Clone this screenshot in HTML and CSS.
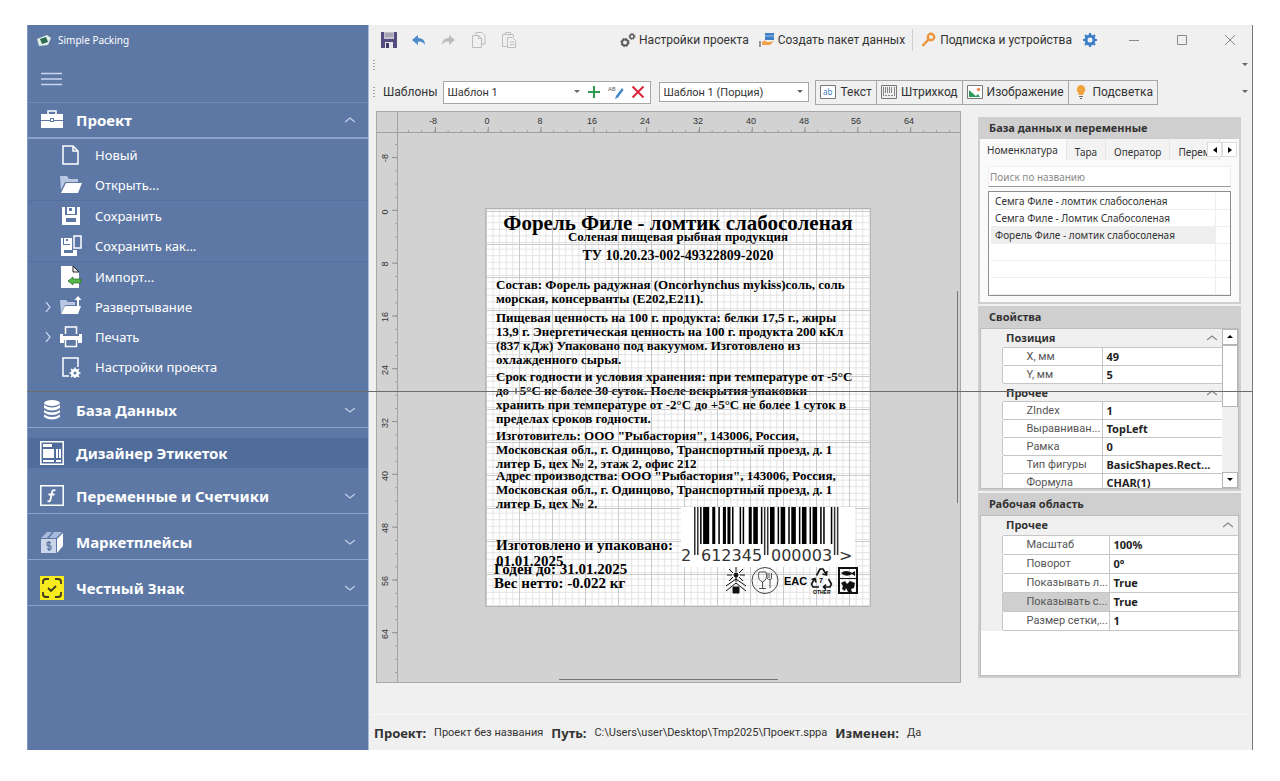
FILE: index.html
```html
<!DOCTYPE html>
<html lang="ru">
<head>
    <meta charset="UTF-8">
    <meta name="viewport" content="width=device-width, initial-scale=1.0">
    <title>Simple Packing</title>
    <link rel="stylesheet" href="styles.css">
</head>
<body>
<div class="app">
    <nav class="sidebar">
        <div class="brand">
            <svg width="16" height="14" viewBox="0 0 16 14"><path d="M1 6l10-4 4 3-3 7-9 1z" fill="#dfeee6"/><path d="M4 6l6-2 2 5-6 2z" fill="#2d6b50"/></svg>
            <span>Simple Packing</span>
        </div>
        <div class="menu-toggle">
            <button type="button" aria-label="Меню"><svg width="21" height="14" viewBox="0 0 21 14"><path d="M0 1.500h21M0 7h21M0 12.500h21" stroke="#c9d6ee" stroke-width="1.500"/></svg></button>
        </div>

        <button type="button" class="group first">
            <svg class="group-icon" viewBox="0 0 24 24"><path d="M8 6V3h8v3" fill="none" stroke="#fff" stroke-width="1.500"/><path d="M1 6h22v6h-9v-2h-4v2H1zM1 13h9v1h4v-1h9v7H1z" fill="#fff"/><path d="M11 11h2v2h-2z" fill="#fff"/></svg>
            <span>Проект</span>
            <svg class="chev" viewBox="0 0 10 6"><path d="M0 5l5-4 5 4"/></svg>
        </button>
        <ul class="items">
            <li><a href="#new"><svg class="item-icon" viewBox="0 0 22 22"><path d="M3 2h10l5 5v13H3zM13 2v5h5" fill="none" stroke="#fff" stroke-width="1.500"/></svg>Новый</a></li>
            <li><a href="#open"><svg class="item-icon" viewBox="0 0 22 22"><path d="M0 2h7l2 3h9v3H5L1 16z" fill="#b9c7e2"/><path d="M6 9h16l-4 10H1z" fill="#fff"/></svg>Открыть...</a></li>
            <li class="ruled"><a href="#save"><svg class="item-icon" viewBox="0 0 22 22"><path d="M2 2h3v8h12V2h3v18H2zM6 13v4h10v-4z" fill="#fff" fill-rule="evenodd"/><path d="M7 2h8v7H7zM9 3v3h3V3z" fill="#fff" fill-rule="evenodd"/></svg>Сохранить</a></li>
            <li><a href="#save-as"><svg class="item-icon" viewBox="0 0 22 22"><path d="M1 3h2v7h7v-7h2v12h5v6H1zM4 15v3h9v-3z" fill="#fff" fill-rule="evenodd"/><path d="M4 3h6v6H4zM6 4v2h2V4z" fill="#fff" fill-rule="evenodd"/><path d="M14 1h7v12h-7z" fill="#5d78a5" stroke="#fff" stroke-width="1.500"/></svg>Сохранить как...</a></li>
            <li class="ruled"><a href="#import"><svg class="item-icon" viewBox="0 0 22 22"><path d="M1 0h12l6 6v16H1z" fill="#fff"/><path d="M13 0l6 6h-6z" fill="#eee" stroke="#222"/><path d="M8 15l5-4v2h8v4h-8v2z" fill="#54b848" stroke="#26652a" stroke-width=".7"/></svg>Импорт...</a></li>
            <li><svg class="expander" viewBox="0 0 6 10"><path d="M1 0l4 5-4 5"/></svg><a href="#deploy"><svg class="item-icon" viewBox="0 0 22 22"><path d="M0 4h6l2 2h7v3H5L1 17z" fill="#b9c7e2"/><path d="M5 10h16l-3 8H1z" fill="#fff"/><path d="M17 10V4h-2.500L18 0l3.500 4H19v6z" fill="#fff"/></svg>Развертывание</a></li>
            <li><svg class="expander" viewBox="0 0 6 10"><path d="M1 0l4 5-4 5"/></svg><a href="#print"><svg class="item-icon" viewBox="0 0 22 22"><path d="M5.500 8V1h11v7" fill="none" stroke="#fff" stroke-width="1.500"/><path d="M0 8h3v3h16V8h3v9h-4v-3H4v3H0z" fill="#fff"/><path d="M3 10h16v3H3z" fill="#fff"/><path d="M5.500 14v6.500h11V14" fill="none" stroke="#fff" stroke-width="1.500"/></svg>Печать</a></li>
            <li><a href="#settings"><svg class="item-icon" viewBox="0 0 22 22"><path d="M9 20H3V2h15v9" fill="none" stroke="#fff" stroke-width="1.500"/><circle cx="15" cy="17" r="3" fill="none" stroke="#fff" stroke-width="2.500"/><path d="M15 11.500v11M9.500 17h11M11 13l8 8M19 13l-8 8" stroke="#fff" stroke-width="1.500"/><circle cx="15" cy="17" r="1.500" fill="#5d78a5"/></svg>Настройки проекта</a></li>
        </ul>

        <button type="button" class="group">
            <svg class="group-icon" viewBox="0 0 24 24"><g fill="#fff"><ellipse cx="12" cy="5" rx="8" ry="3"/><path d="M4 7q8 5 16 0v3q-8 5-16 0zM4 12q8 5 16 0v2.500q-8 5-16 0zM4 16.500q8 5 16 0V19q-8 5-16 0z"/></g></svg>
            <span>База Данных</span>
            <svg class="chev" viewBox="0 0 10 6"><path d="M0 1l5 4 5-4"/></svg>
        </button>
        <button type="button" class="group active">
            <svg class="group-icon" viewBox="0 0 24 24"><path d="M.8.800h22.400v22.400H.8z" fill="none" stroke="#fff" stroke-width="1.500"/><path d="M3 3h9v3H3zM3 8h11v9H3zM3 19h11v2H3zM16 8h2v9h-2zM19 8h2v9h-2zM16 19h5v2h-5z" fill="#fff"/></svg>
            <span>Дизайнер Этикеток</span>
        </button>
        <button type="button" class="group">
            <svg class="group-icon" viewBox="0 0 24 24"><path d="M.8 1.800h22.400v19.400H.8z" fill="none" stroke="#fff" stroke-width="1.500"/><path d="M15.500 6.500q-3-1.500-3.500 2l-1.500 7q-.5 2.500-3 1.500M8.500 10.500h6" fill="none" stroke="#fff" stroke-width="1.800"/></svg>
            <span>Переменные и Счетчики</span>
            <svg class="chev" viewBox="0 0 10 6"><path d="M0 1l5 4 5-4"/></svg>
        </button>
        <button type="button" class="group">
            <svg class="group-icon" viewBox="0 0 24 24"><path d="M1 8l6-6h5L7 8zM9 8l5-6h8l-6 6z" fill="#a9bbdc"/><path d="M1 9h15v14H1z" fill="#ccd6ea"/><path d="M17 9l6-6v13l-6 7z" fill="#fff"/><path d="M11 13q-4-2-4 .8t2 1.800 2 2.300-4 .6M9 11v10" fill="none" stroke="#5d78a5" stroke-width="1.300"/></svg>
            <span>Маркетплейсы</span>
            <svg class="chev" viewBox="0 0 10 6"><path d="M0 1l5 4 5-4"/></svg>
        </button>
        <button type="button" class="group">
            <svg class="group-icon" viewBox="0 0 24 24"><path d="M0 0h24v24H0z" fill="#f7ea1e"/><path d="M3 8V6q0-3 3-3h3M15 3h3q3 0 3 3v2M21 16v2q0 3-3 3h-3M9 21H6q-3 0-3-3v-2M8 12l3 3 5-5" fill="none" stroke="#3a3a20" stroke-width="1.800"/></svg>
            <span>Честный Знак</span>
            <svg class="chev" viewBox="0 0 10 6"><path d="M0 1l5 4 5-4"/></svg>
        </button>
    </nav>

    <main class="main">
        <header class="titlebar">
            <div class="quick">
                <button type="button" aria-label="Сохранить"><svg width="18" height="18" viewBox="0 0 18 18"><path d="M1 1h16v16H1z" fill="#574c80"/><path d="M4 1h10v7H4z" fill="#c5c3cd"/><path d="M5 3h8M5 5h8" stroke="#8a8799"/><path d="M5 11h8v6H5z" fill="#e8e8ee"/><path d="M6 12h3v5H6z" fill="#453b6b"/></svg></button>
                <button type="button" aria-label="Отменить"><svg width="18" height="18" viewBox="0 0 18 18"><path d="M2 9l6-5v3q7 0 7 7-2-4-7-3.500V14z" fill="#4a8acb"/></svg></button>
                <button type="button" aria-label="Вернуть"><svg width="18" height="18" viewBox="0 0 18 18"><path d="M15 9L9 4v3q-7 0-7 7 2-4 7-3.500V14z" fill="#bcbcbc"/></svg></button>
                <button type="button" aria-label="Копировать"><svg width="18" height="18" viewBox="0 0 18 18"><path d="M6 4V1.500h6l3 3V13h-3M2.500 4.500h6l3 3v9h-9zM8.500 4.500v3h3" fill="none" stroke="#bdbdbd"/></svg></button>
                <button type="button" aria-label="Вставить"><svg width="18" height="18" viewBox="0 0 18 18"><path d="M7 15.500H2.500v-12h11V6M5.500 3.500v-2h5v2zM7.500 6.500h5l3 3v7h-8zM10 11h4M10 13.500h4" fill="none" stroke="#bdbdbd"/></svg></button>
            </div>
            <button type="button" class="cmd"><svg width="16" height="16" viewBox="0 0 16 16"><g fill="none" stroke="#5f5f5f"><circle cx="5" cy="10.500" r="3" stroke-width="2"/><circle cx="5" cy="10.500" r="4.200" stroke-width="1" stroke-dasharray="1.500 1.800"/><circle cx="12" cy="4.500" r="2" stroke-width="1.600"/><circle cx="12" cy="4.500" r="3" stroke-width="1" stroke-dasharray="1.200 1.200"/></g></svg>Настройки проекта</button>
            <button type="button" class="cmd"><svg width="16" height="16" viewBox="0 0 16 16"><path d="M6 1h9v7H6z" fill="#3f7fc4"/><path d="M6 4h9" stroke="#9cc2e8"/><path d="M3 10q3-3 5 0h3l4-1-4 4H3z" fill="#f2a04a"/><path d="M1 9v6" stroke="#777" stroke-width="1.500"/></svg>Создать пакет данных</button>
            <button type="button" class="cmd split"><svg width="16" height="16" viewBox="0 0 16 16"><path d="M7.500 7.500L1.500 14" stroke="#e8953c" stroke-width="2.500"/><circle cx="10" cy="5" r="3.200" fill="none" stroke="#e8953c" stroke-width="2.400"/></svg>Подписка и устройства</button>
            <button type="button" class="cmd" aria-label="Параметры"><svg width="16" height="16" viewBox="0 0 16 16"><circle cx="8" cy="8" r="4" fill="none" stroke="#3c7fc6" stroke-width="3"/><path d="M8 1v3M8 12v3M1 8h3M12 8h3M3 3l2 2M11 11l2 2M13 3l-2 2M5 11l-2 2" stroke="#3c7fc6" stroke-width="2.200"/></svg></button>
            <div class="window-buttons">
                <button type="button" aria-label="Свернуть"><svg width="12" height="12" viewBox="0 0 12 12"><path d="M1 6.500h10"/></svg></button>
                <button type="button" aria-label="Развернуть"><svg width="12" height="12" viewBox="0 0 12 12"><path d="M1.500 1.500h9v9h-9z"/></svg></button>
                <button type="button" aria-label="Закрыть"><svg width="12" height="12" viewBox="0 0 12 12"><path d="M1 1l10 10M11 1L1 11"/></svg></button>
            </div>
        </header>

        <div class="toolbar slim">
            <i class="grip"></i>
            <svg class="more" viewBox="0 0 6 4"><path d="M0 0h6L3 3z"/></svg>
        </div>
        <div class="toolbar">
            <i class="grip"></i>
            <label for="template">Шаблоны</label>
            <div class="combo wide">
                <select id="template"><option>Шаблон 1</option></select>
                <svg class="arrow" viewBox="0 0 6 4"><path d="M0 0h6L3 3z"/></svg>
                <button type="button" aria-label="Добавить"><svg width="14" height="14" viewBox="0 0 14 14"><path d="M7 1v12M1 7h12" stroke="#2f9a4d" stroke-width="2"/></svg></button>
                <button type="button" aria-label="Переименовать"><svg width="16" height="14" viewBox="0 0 16 14"><text x="0" y="6" class="tiny">AB</text><path d="M14 3L8 11l-1 3 3-1.500L15.500 5z" fill="#3f86c9"/></svg></button>
                <button type="button" aria-label="Удалить"><svg width="14" height="14" viewBox="0 0 14 14"><path d="M1.500 1.500l11 11M12.500 1.500l-11 11" stroke="#d8283c" stroke-width="2"/></svg></button>
            </div>
            <div class="combo">
                <select id="variant" aria-label="Вариант шаблона"><option>Шаблон 1 (Порция)</option></select>
                <svg class="arrow" viewBox="0 0 6 4"><path d="M0 0h6L3 3z"/></svg>
            </div>
            <div class="tools">
                <button type="button"><svg width="16" height="14" viewBox="0 0 16 14"><path d="M.5.500h15v13H.5z" fill="#fff" stroke="#777"/><text x="3" y="10" class="ab">ab</text></svg>Текст</button>
                <button type="button"><svg width="16" height="14" viewBox="0 0 16 14"><path d="M.5.500h15v13H.5z" fill="#eee" stroke="#777"/><path d="M2.500 2v9M4.500 2v6M6.500 2v6M8.500 2v6M10.500 2v6M13.500 2v9M4 10.500h2M7 10.500h2M10 10.500h2" stroke="#888"/></svg>Штрихкод</button>
                <button type="button"><svg width="16" height="14" viewBox="0 0 16 14"><path d="M.5.500h15v13H.5z" fill="#fff" stroke="#777"/><path d="M2 12V5l8 7z" fill="#2f9a5c"/><path d="M8 12l3-3 2 3z" fill="#2f9a5c"/><circle cx="11.500" cy="4.500" r="1.800" fill="#ef8f5a"/></svg>Изображение</button>
                <button type="button"><svg width="16" height="16" viewBox="0 0 16 16"><path d="M8 1a4.500 4.500 0 0 1 2.500 8v2h-5V9A4.500 4.500 0 0 1 8 1z" fill="#f0a03c"/><path d="M6 12.500h4M7 14.500h2" stroke="#666" stroke-width="1.200"/></svg>Подсветка</button>
            </div>
            <svg class="more" viewBox="0 0 6 4"><path d="M0 0h6L3 3z"/></svg>
        </div>

        <div class="workspace">
            <section class="canvas" aria-label="Макет этикетки">
                <div class="corner"></div>
                <svg class="ruler ruler-x" width="100%" height="21">
                    <defs>
                        <pattern id="minor-x" x="10" width="13.200" height="21" patternUnits="userSpaceOnUse"><path d="M.5 18v3" stroke="#a0a0a0"/></pattern>
                        <pattern id="major-x" x="37" width="52.800" height="21" patternUnits="userSpaceOnUse"><path d="M.5 15v6" stroke="#909090"/></pattern>
                    </defs>
                    <rect width="100%" height="21" fill="url(#minor-x)"/>
                    <rect width="100%" height="21" fill="url(#major-x)"/>
                    <g>
                        <text x="35" y="12">-8</text><text x="89" y="12">0</text><text x="142" y="12">8</text><text x="194" y="12">16</text><text x="247" y="12">24</text><text x="300" y="12">32</text><text x="353" y="12">40</text><text x="406" y="12">48</text><text x="458" y="12">56</text><text x="511" y="12">64</text>
                    </g>
                </svg>
                <svg class="ruler ruler-y" width="21" height="100%">
                    <defs>
                        <pattern id="minor-y" y="11" width="21" height="13.200" patternUnits="userSpaceOnUse"><path d="M18 .5h3" stroke="#a0a0a0"/></pattern>
                        <pattern id="major-y" y="24" width="21" height="52.800" patternUnits="userSpaceOnUse"><path d="M15 .5h6" stroke="#909090"/></pattern>
                    </defs>
                    <rect width="21" height="100%" fill="url(#minor-y)"/>
                    <rect width="21" height="100%" fill="url(#major-y)"/>
                    <g transform="rotate(-90)">
                        <text x="-25" y="11">-8</text><text x="-79" y="11">0</text><text x="-131" y="11">8</text><text x="-184" y="11">16</text><text x="-237" y="11">24</text><text x="-290" y="11">32</text><text x="-343" y="11">40</text><text x="-395" y="11">48</text><text x="-448" y="11">56</text><text x="-501" y="11">64</text>
                    </g>
                </svg>
                <div class="scene">
                    <article class="sheet">
                        <svg class="grid" width="100%" height="100%">
                            <defs>
                                <pattern id="cell" width="6.600" height="6.600" patternUnits="userSpaceOnUse"><path d="M.5 0v6.600M0 .5h6.600" stroke="#e2e2e2"/></pattern>
                                <pattern id="block" width="33" height="33" patternUnits="userSpaceOnUse"><path d="M.5 0v33M0 2.500h33" stroke="#cacaca"/></pattern>
                            </defs>
                            <rect width="100%" height="100%" fill="url(#cell)"/>
                            <rect width="100%" height="100%" fill="url(#block)"/>
                        </svg>
                        <h1 class="text product">Форель Филе - ломтик слабосоленая</h1>
                        <p class="text kind">Соленая пищевая рыбная продукция</p>
                        <p class="text spec">ТУ 10.20.23-002-49322809-2020</p>
                        <p class="text contents">Состав: Форель радужная (Oncorhynchus mykiss)соль, соль<br>морская, консерванты (E202,E211).</p>
                        <p class="text nutrition">Пищевая ценность на 100 г. продукта: белки 17,5 г., жиры<br>13,9 г. Энергетическая ценность на 100 г. продукта 200 кКл<br>(837 кДж) Упаковано под вакуумом. Изготовлено из<br>охлажденного сырья.</p>
                        <p class="text storage">Срок годности и условия хранения: при температуре от -5°C<br>до +5°C не более 30 суток. После вскрытия упаковки<br>хранить при температуре от -2°C до +5°C не более 1 суток в<br>пределах сроков годности.</p>
                        <p class="text maker">Изготовитель: ООО "Рыбастория", 143006, Россия,<br>Московская обл., г. Одинцово, Транспортный проезд, д. 1<br>литер Б, цех № 2, этаж 2, офис 212</p>
                        <p class="text address">Адрес производства: ООО "Рыбастория", 143006, Россия,<br>Московская обл., г. Одинцово, Транспортный проезд, д. 1<br>литер Б, цех № 2.</p>
                        <p class="text packed">Изготовлено и упаковано:<br>01.01.2025</p>
                        <p class="text expires">Годен до: 31.01.2025</p>
                        <p class="text weight">Вес нетто: -0.022 кг</p>
                        <svg class="barcode" width="174" height="60" viewBox="0 0 174 60">
                            <g transform="translate(13 0) scale(1.520 1)">
                                <path fill="#000" d="M4 0h1v37h-1zM6 0h4v37h-4zM12 0h2v37h-2zM16 0h1v37h-1zM19 0h2v37h-2zM22 0h2v37h-2zM25 0h1v37h-1zM30 0h1v37h-1zM32 0h1v37h-1zM36 0h2v37h-2zM39 0h3v37h-3zM44 0h1v37h-1zM50 0h3v37h-3zM55 0h1v37h-1zM57 0h3v37h-3zM62 0h1v37h-1zM64 0h3v37h-3zM69 0h1v37h-1zM71 0h3v37h-3zM76 0h1v37h-1zM78 0h3v37h-3zM83 0h1v37h-1zM85 0h1v37h-1zM90 0h1v37h-1z"/>
                                <path fill="#333" d="M0 0h1v48h-1zM2 0h1v48h-1zM46 0h1v48h-1zM48 0h1v48h-1zM92 0h1v48h-1zM94 0h1v48h-1z"/>
                            </g>
                            <text x="0" y="54">2</text><text x="20" y="54">612345</text><text x="90" y="54">000003</text><text x="158" y="54">&gt;</text>
                        </svg>
                        <svg class="marks" width="136" height="28" viewBox="0 0 136 28">
                            <g stroke="#111" fill="none">
                                <circle cx="12" cy="8" r="2" fill="#111"/>
                                <path d="M12 0v5M12 10v5M3 8h5M16 8h5M5 2l4 4M19 2l-4 4M5 14l4-4M19 14l-4-4M2 19l10-7 10 7M2 24l10-8 10 8"/>
                                <path d="M9 20h6v6H9z" fill="#111"/>
                                <circle cx="41" cy="13.500" r="13" stroke="#444"/>
                                <path d="M35 5h7q2 8-3.500 10Q33 13 35 5zM38.500 15v6M35 21.500h7M43 6v5q1 2 3 1.500V21M45 6v5M47.500 6v5q0 1.500-1.500 1.500" stroke="#555"/>
                                <path d="M92.500 8.500l3.500-6.500h3l3 5M103 4l-.5 4-4-1M104.500 12l3 5-1.500 3h-6M102 17.500l-2.500 2.500 2.500 2.500M95 20h-6l-1.500-3 3-5M87.500 12.500l3.500-1 1 4" stroke-width="1.600"/>
                            </g>
                            <text x="60" y="18" class="eac">EAC</text>
                            <text x="95" y="16" class="seven">7</text>
                            <text x="89" y="27" class="other">OTHER</text>
                            <path d="M115 1h18v25h-18z" fill="none" stroke="#111" stroke-width="2"/>
                            <path d="M117 6q5-4 11 0l3-2v5l-3-2q-6 4-11-1zM117 16l4-2 2 3 3-3 5 2-1 5-3 1 1 3h-4l-2-4-1 3-3-2 1-3zM115 11h18v1h-18z" fill="#111"/>
                        </svg>
                    </article>
                    <i class="thumb thumb-x"></i>
                    <i class="thumb thumb-y"></i>
                </div>
            </section>

            <aside class="panels">
                <section class="panel">
                    <h2>База данных и переменные</h2>
                    <div class="data">
                        <div class="tabs">
                            <button type="button" class="tab current">Номенклатура</button>
                            <button type="button" class="tab">Тара</button>
                            <button type="button" class="tab">Оператор</button>
                            <button type="button" class="tab">Перем</button>
                            <div class="pager">
                                <button type="button" aria-label="Назад"><svg width="4" height="6" viewBox="0 0 4 6"><path d="M4 0v6L0 3z"/></svg></button>
                                <button type="button" aria-label="Вперед"><svg width="4" height="6" viewBox="0 0 4 6"><path d="M0 0v6l4-3z"/></svg></button>
                            </div>
                        </div>
                        <input type="text" class="search" placeholder="Поиск по названию" aria-label="Поиск по названию">
                        <table class="list">
                            <tr><td>Семга Филе - ломтик слабосоленая</td><td></td></tr>
                            <tr><td>Семга Филе - Ломтик Слабосоленая</td><td></td></tr>
                            <tr class="selected"><td>Форель Филе - ломтик слабосоленая</td><td></td></tr>
                            <tr><td></td><td></td></tr>
                            <tr><td></td><td></td></tr>
                            <tr><td></td><td></td></tr>
                        </table>
                    </div>
                </section>

                <section class="panel">
                    <h2>Свойства</h2>
                    <div class="props">
                        <table>
                            <colgroup><col class="gutter"><col class="name"><col></colgroup>
                            <tr><th></th><th colspan="2">Позиция<svg class="fold" viewBox="0 0 10 6"><path d="M0 5l5-4 5 4"/></svg></th></tr>
                            <tr><th></th><td>X, мм</td><td>49</td></tr>
                            <tr><th></th><td>Y, мм</td><td>5</td></tr>
                            <tr><th></th><th colspan="2">Прочее<svg class="fold" viewBox="0 0 10 6"><path d="M0 5l5-4 5 4"/></svg></th></tr>
                            <tr><th></th><td>ZIndex</td><td>1</td></tr>
                            <tr><th></th><td>Выравниван...</td><td>TopLeft</td></tr>
                            <tr><th></th><td>Рамка</td><td>0</td></tr>
                            <tr><th></th><td>Тип фигуры</td><td>BasicShapes.Rect...</td></tr>
                            <tr><th></th><td>Формула</td><td>CHAR(1)</td></tr>
                        </table>
                        <div class="scrollbar">
                            <button type="button" aria-label="Вверх"><svg width="6" height="4" viewBox="0 0 6 4"><path d="M0 3h6L3 0z"/></svg></button>
                            <i class="handle"></i>
                            <button type="button" aria-label="Вниз"><svg width="6" height="4" viewBox="0 0 6 4"><path d="M0 0h6L3 3z"/></svg></button>
                        </div>
                    </div>
                </section>

                <section class="panel">
                    <h2>Рабочая область</h2>
                    <div class="props roomy">
                        <table>
                            <colgroup><col class="gutter"><col class="name"><col></colgroup>
                            <tr><th></th><th colspan="2">Прочее<svg class="fold" viewBox="0 0 10 6"><path d="M0 5l5-4 5 4"/></svg></th></tr>
                            <tr><th></th><td>Масштаб</td><td>100%</td></tr>
                            <tr><th></th><td>Поворот</td><td>0°</td></tr>
                            <tr><th></th><td>Показывать л...</td><td>True</td></tr>
                            <tr class="focus"><th></th><td>Показывать с...</td><td>True</td></tr>
                            <tr><th></th><td>Размер сетки,...</td><td>1</td></tr>
                        </table>
                    </div>
                </section>
            </aside>
        </div>

        <footer class="status">
            <b>Проект:</b><span>Проект без названия</span>
            <b>Путь:</b><span>C:\Users\user\Desktop\Tmp2025\Проект.sppa</span>
            <b>Изменен:</b><span>Да</span>
        </footer>
    </main>
    <i class="guide"></i>
</div>
</body>
</html>
```
FILE: styles.css
```css
* {
    box-sizing: border-box;
}

body {
    margin: 0;
    padding: 25px 27px 31px;
    background: #fff;
    color: #333;
    font-family: Roboto, "Noto Sans", sans-serif;
    font-size: 12px;
}

button {
    margin: 0;
    padding: 0;
    border: none;
    background: none;
    color: inherit;
    font: inherit;
    display: flex;
    align-items: center;
    white-space: nowrap;
}

svg {
    display: block;
    flex: none;
}

.app {
    position: relative;
    display: grid;
    grid-template-columns: 342px 1fr;
    min-height: calc(100vh - 56px);
}

/* thin line across the whole window */
.guide {
    position: absolute;
    left: 0;
    right: 0;
    top: 366px;
    height: 1px;
    background: #6b6b6b;
}

/* sidebar */
.sidebar {
    background: #5d78a5;
    color: #fff;
    border-left: 1px solid #7f97c2;
    border-right: 1px solid #a9bbdb;
    font-family: "Noto Sans", sans-serif;
}

.brand {
    display: flex;
    align-items: center;
    gap: 6px;
    height: 30px;
    padding-left: 8px;
    font-size: 10px;
}

.menu-toggle {
    display: flex;
    align-items: center;
    height: 48px;
    padding-left: 13px;
    border-bottom: 1px solid #6f89b6;
}

.group {
    width: 100%;
    height: 36px;
    margin-top: 10px;
    padding: 0 13px 0 12px;
    gap: 12px;
    border-bottom: 1px solid #8aa2cc;
    font-size: 15px;
    font-weight: bold;
}

.group.first {
    margin-top: 0;
    border-bottom-width: 2px;
}

.group.active {
    height: 30px;
    background: #4f6c9b;
    border-bottom: none;
}

.group-icon {
    width: 24px;
    height: 24px;
}

.chev {
    width: 10px;
    height: 6px;
    margin-left: auto;
}

.chev path,
.expander path,
.fold path {
    fill: none;
    stroke: #c3d0ea;
    stroke-width: 1.3;
}

.items {
    list-style: none;
    margin: 0;
    padding: 1px 0 0;
}

.items li {
    display: flex;
    align-items: center;
    justify-content: flex-end;
    height: 30px;
}

.items .ruled {
    height: 31px;
    border-top: 1px solid #54709f;
}

.items a {
    display: flex;
    align-items: center;
    gap: 13px;
    width: 308px;
    color: #fff;
    font-size: 13px;
    text-decoration: none;
}

.item-icon {
    width: 22px;
    height: 22px;
}

.expander {
    width: 6px;
    height: 10px;
    margin-right: 9px;
}

/* main area */
.main {
    display: flex;
    flex-direction: column;
    min-width: 0;
    background: #f0f0f0;
    border-right: 1px solid #777;
}

.titlebar {
    display: flex;
    align-items: center;
    gap: 10px;
    height: 29px;
    padding-left: 11px;
}

.quick {
    display: flex;
    gap: 12px;
    margin-right: auto;
}

.cmd {
    gap: 3px;
}

.split {
    height: 22px;
    padding-left: 8px;
    margin-left: -3px;
    border-left: 1px solid #d0d0d0;
}

.window-buttons {
    display: flex;
    gap: 36px;
    padding: 0 16px 0 20px;
}

.window-buttons path {
    fill: none;
    stroke: #8a8a8a;
}

.toolbar {
    display: flex;
    align-items: center;
    gap: 6px;
    height: 32px;
    padding: 0 4px;
}

.toolbar.slim {
    height: 22px;
}

.grip {
    width: 2px;
    height: 11px;
    background: repeating-linear-gradient(#a5a5a5 0 1px, transparent 1px 3px);
}

.toolbar label {
    padding-left: 2px;
}

.more {
    width: 6px;
    height: 4px;
    margin-left: auto;
    fill: #666;
}

.combo {
    display: flex;
    align-items: center;
    gap: 7px;
    width: 150px;
    height: 20px;
    padding-right: 5px;
    background: #fff;
    border: 1px solid #a6a6a6;
}

.combo.wide {
    width: 208px;
    height: 23px;
}

.combo.wide + .combo {
    margin-left: 2px;
}

.combo select {
    flex: 1;
    min-width: 0;
    appearance: none;
    border: none;
    padding: 0 0 0 3px;
    background: none;
    color: #333;
    font: inherit;
    font-size: 11px;
}

.arrow {
    width: 6px;
    height: 4px;
    fill: #666;
}

.tiny {
    font: 6px "Noto Sans", sans-serif;
    fill: #555;
}

.ab {
    font: 8px "Noto Sans", sans-serif;
    fill: #3c7fc6;
}

.tools {
    display: flex;
}

.tools button {
    height: 25px;
    padding: 0 4px;
    gap: 4px;
    border: 1px solid #a6a6a6;
}

.tools button + button {
    border-left: none;
}

/* label canvas */
.workspace {
    flex: 1;
    display: grid;
    grid-template-columns: 1fr 263px;
    gap: 17px;
    padding: 3px 11px 31px 7px;
}

.canvas {
    display: grid;
    grid-template-columns: 21px 1fr;
    grid-template-rows: 21px 1fr;
    min-width: 0;
    background: #d2d2d2;
    border: 1px solid #a9a9a9;
    overflow: hidden;
}

.corner {
    border-right: 1px solid #a0a0a0;
    border-bottom: 1px solid #a0a0a0;
}

.ruler text {
    font: 9px "Liberation Sans", sans-serif;
    fill: #333;
    text-anchor: middle;
}

.ruler-x {
    border-bottom: 1px solid #a0a0a0;
}

.ruler-y {
    border-right: 1px solid #a0a0a0;
}

.scene {
    position: relative;
}

.thumb {
    position: absolute;
    background: #777;
}

.thumb-x {
    left: 161px;
    bottom: 2px;
    width: 219px;
    height: 1px;
}

.thumb-y {
    top: 158px;
    right: 2px;
    width: 1px;
    height: 212px;
}

.sheet {
    position: absolute;
    left: 87px;
    top: 75px;
    width: 386px;
    height: 399px;
    background: #fff;
    border: 1px solid #b5b5b5;
    color: #000;
}

.text {
    position: absolute;
    left: 10px;
    margin: 0;
    font: bold 13px/14px "Liberation Serif", serif;
    white-space: nowrap;
}

.product,
.kind,
.spec {
    left: 0;
    right: 0;
    text-align: center;
}

.product {
    top: 2px;
    font-size: 21px;
    line-height: 24px;
}

.kind { top: 21px; }

.spec {
    top: 40px;
    font-size: 14px;
}

.contents { top: 69px; }
.nutrition { top: 102px; }
.storage { top: 161px; }
.maker { top: 220px; }
.address { top: 260px; }

.packed,
.expires,
.weight {
    font-size: 15px;
    line-height: 16px;
}

.packed { top: 328px; }

.expires {
    left: 8px;
    top: 352px;
}

.weight {
    left: 8px;
    top: 366px;
}

.barcode {
    position: absolute;
    left: 195px;
    top: 298px;
    background: #fff;
}

.barcode text {
    font: 16px "DejaVu Sans", sans-serif;
    fill: #333;
}

.marks {
    position: absolute;
    left: 238px;
    top: 358px;
}

.eac {
    font: bold 11px "Liberation Sans Narrow", "Liberation Sans", sans-serif;
}

.seven {
    font: bold 7px "Liberation Sans", sans-serif;
}

.other {
    font: bold 5px "Liberation Sans", sans-serif;
}

/* right panels */
.panels {
    display: flex;
    flex-direction: column;
    gap: 2px;
    padding-top: 6px;
}

.panel {
    background: #cfcfcf;
    padding: 0 2px 2px;
}

.panel h2 {
    margin: 0;
    padding-left: 9px;
    font: bold 11px/22px "Noto Sans", sans-serif;
}

.data {
    background: #fafafa;
    padding: 0 8px 6px;
    font-family: "Noto Sans", sans-serif;
    font-size: 10px;
}

.tabs {
    position: relative;
    display: flex;
    height: 21px;
    margin: 0 -8px;
    overflow: hidden;
}

.tab {
    padding: 5px 8px 0;
    background: #f3f3f3;
    border-right: 1px solid #e6e6e6;
}

.tab.current {
    padding: 0 8px 0 7px;
    background: #fafafa;
}

/* arrows lie over the clipped last tab */
.pager {
    position: absolute;
    right: 0;
    top: 3px;
    display: flex;
    padding-right: 2px;
    background: #fafafa;
}

.pager button {
    width: 15px;
    height: 15px;
    justify-content: center;
    background: #fff;
    border: 1px solid #ddd;
}

.search {
    display: block;
    width: 100%;
    height: 21px;
    margin: 6px 0 4px;
    padding: 0 1px;
    border: 1px solid #eee;
    border-bottom-color: #999;
    background: #fff;
    font: inherit;
}

.search::placeholder {
    color: #8a8a8a;
}

table {
    border-collapse: collapse;
    table-layout: fixed;
    width: 100%;
}

.list {
    border-collapse: separate;
    border-spacing: 0;
    background: #fff;
    border: 1px solid #8f8f8f;
    padding: 1px 0 0 2px;
}

.list td {
    height: 17px;
    padding: 1px 0 0 4px;
    border-bottom: 1px solid #eee;
    line-height: 15px;
    white-space: nowrap;
}

.list td + td {
    width: 15px;
    border-left: 1px solid #eee;
}

.list .selected td:first-child {
    background: #efefef;
}

.props {
    display: flex;
    height: 161px;
    background: #fff;
    border: 1px solid #bdbdbd;
    overflow: hidden;
    font-size: 11px;
}

.props table {
    align-self: flex-start;
}

.gutter {
    width: 21px;
}

.name {
    width: 100px;
}

.props th,
.props td {
    height: 18px;
    padding: 0 0 0 4px;
    border-bottom: 1px solid #c6c6c6;
    line-height: 17px;
    text-align: left;
    white-space: nowrap;
}

.props th {
    background: #f0f0f0;
    font-family: "Noto Sans", sans-serif;
}

.props th:first-child {
    border-bottom-color: #f0f0f0;
}

.props td {
    padding-left: 24px;
    border-left: 1px solid #c6c6c6;
    color: #555;
}

.props td + td {
    padding-left: 4px;
    color: #222;
    font-family: "Noto Sans", sans-serif;
    font-weight: bold;
}

.props .focus td:nth-child(2) {
    background: #cfcfcf;
}

.roomy .name {
    width: 107px;
}

.roomy th,
.roomy td {
    height: 19px;
    line-height: 18px;
}

.roomy table {
    border-bottom: 1px solid #c6c6c6;
}

.fold {
    float: right;
    width: 10px;
    height: 6px;
    margin: 6px 5px 0;
}

.fold path {
    stroke: #888;
}

.scrollbar {
    flex: none;
    display: flex;
    flex-direction: column;
    width: 16px;
    background: #f0f0f0;
}

.scrollbar button,
.handle {
    height: 16px;
    justify-content: center;
    background: #fff;
    border: 1px solid #b5b5b5;
}

.handle {
    height: 62px;
    margin-bottom: auto;
}

/* status bar */
.status {
    display: flex;
    align-items: center;
    gap: 8px;
    height: 36px;
    padding-left: 5px;
    border-top: 1px solid #f7f7f7;
    font-size: 11px;
}

.status b {
    font: bold 13px "Noto Sans", sans-serif;
}
```
